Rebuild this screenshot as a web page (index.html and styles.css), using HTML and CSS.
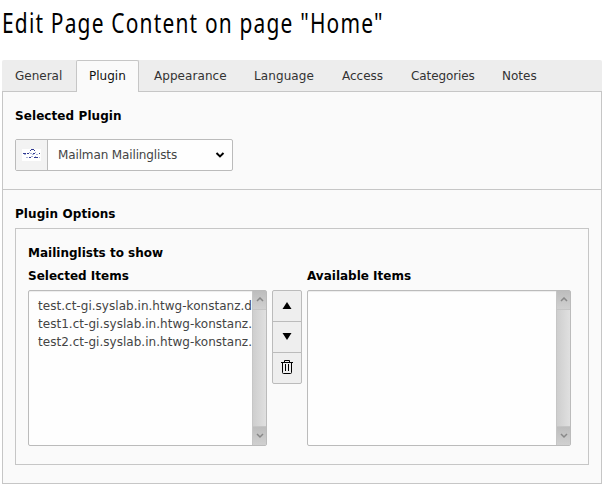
FILE: index.html
```html
<!DOCTYPE html>
<html lang="en">
<head>
<meta charset="utf-8">
<title>Edit Page Content</title>
<link rel="stylesheet" href="styles.css">
</head>
<body>
<h1><span class="title">Edit Page Content on page "Home"</span></h1>
<main class="module">
  <nav class="tabs">
    <a class="tab general">General</a><a class="tab active">Plugin</a><a class="tab appearance">Appearance</a><a class="tab language">Language</a><a class="tab access">Access</a><a class="tab categories">Categories</a><a class="tab">Notes</a>
  </nav>
  <div class="panel">
    <section class="selected-plugin">
      <h2>Selected Plugin</h2>
      <div class="select">
        <span class="addon">
          <svg width="19" height="12" viewBox="0 0 19 12" shape-rendering="crispEdges">
            <path fill="#fff" d="M0 0h19v12H0z"/>
            <path fill="#313a91" d="M1 4h3v1H1zM5 4h2v1H5zM9 0h3v1H9zM8 1h1v1H8zM12 1h1v1h-1zM7 8h2v1H7zM12 8h4v1h-4zM11 4h2v1h-2zM17 4h1v1h-1z"/>
            <path fill="#a9b2d8" d="M2 5h2v1H2zM7 3h1v1H7zM8 4h2v1H8zM10 5h2v1h-2zM9 7h2v1H9zM4 8h2v1H4zM14 5h2v1h-2zM13 7h1v1h-1zM17 8h1v1h-1zM13 3h1v1h-1z"/>
          </svg>
        </span>
        <span class="value">Mailman Mailinglists</span>
        <svg class="caret" width="10" height="6" viewBox="0 0 10 6"><path d="M1.5 1l3.5 3.4L8.500 1" fill="none" stroke="#000" stroke-width="2"/></svg>
      </div>
    </section>
    <section class="options">
      <h2>Plugin Options</h2>
      <div class="box">
        <h3>Mailinglists to show</h3>
        <div class="columns">
          <div class="column chosen">
            <h3>Selected Items</h3>
            <div class="list">
              <div class="items">
                <div>test.ct-gi.syslab.in.htwg-konstanz.d</div>
                <div>test1.ct-gi.syslab.in.htwg-konstanz.</div>
                <div>test2.ct-gi.syslab.in.htwg-konstanz.</div>
              </div>
              <div class="scrollbar">
                <span class="up"><svg width="8" height="6" viewBox="0 0 8 6"><path d="M1 4l3-3 3 3"/></svg></span>
                <span class="down"><svg width="8" height="6" viewBox="0 0 8 6"><path d="M1 1l3 3 3-3"/></svg></span>
              </div>
            </div>
          </div>
          <div class="buttons">
            <span class="button"><svg width="16" height="16" viewBox="0 0 16 16"><path d="M3.500 11h9L8 4z"/></svg></span>
            <span class="button"><svg width="16" height="16" viewBox="0 0 16 16"><path d="M3.500 4h9L8 11z"/></svg></span>
            <span class="button"><svg width="16" height="16" viewBox="0 0 16 16"><path class="line" d="M2 2.500h12M5.500 2V.5h5V2M3.500 3v9.500a1 1 0 0 0 1 1h7a1 1 0 0 0 1-1V3M6.500 4v7M9.500 4v7"/></svg></span>
          </div>
          <div class="column available">
            <h3>Available Items</h3>
            <div class="list">
              <div class="items"></div>
              <div class="scrollbar">
                <span class="up"><svg width="8" height="6" viewBox="0 0 8 6"><path d="M1 4l3-3 3 3"/></svg></span>
                <span class="down"><svg width="8" height="6" viewBox="0 0 8 6"><path d="M1 1l3 3 3-3"/></svg></span>
              </div>
            </div>
          </div>
        </div>
      </div>
    </section>
  </div>
</main>
</body>
</html>
```
FILE: styles.css
```css
* { box-sizing: border-box; }
body {
  margin: 0;
  background: #fff;
  color: #000;
  font: 12px/18px "DejaVu Sans", Verdana, sans-serif;
  overflow: hidden;
}
h1 {
  height: 60px;
  margin: 0;
  padding: 5px 0 0 2px;
  font: 400 26.5px/36px "Noto Sans", sans-serif;
  white-space: nowrap;
}
.title {
  display: inline-block;
  letter-spacing: 1.5px;
  transform: scaleX(.79);
  transform-origin: 0 0;
}
h2, h3 { margin: 0; font-size: 12px; line-height: 18px; font-weight: 700; }
h2 { letter-spacing: .08px; }
.module { width: 600px; margin-left: 2px; }
.tabs {
  display: flex;
  height: 32px;
  background: #ededed;
  border-radius: 2px 2px 0 0;
  box-shadow: inset 0 -1px #c6c6c6;
}
.tab {
  height: 32px;
  padding: 0 12px;
  border: 1px solid transparent;
  border-bottom: 0;
  line-height: 30px;
  color: #333;
}
.general { width: 74px; }
.appearance { width: 100px; letter-spacing: .06px; }
.language { width: 88px; letter-spacing: .1px; }
.access { width: 69px; }
.categories { width: 91px; letter-spacing: -.1px; }
.tab.active {
  width: 63px;
  margin-right: 2px;
  background: #fafafa;
  border-color: #c6c6c6;
  border-radius: 2px 2px 0 0;
  color: #111;
}
.panel {
  height: 392px;
  border: 1px solid #c6c6c6;
  border-top: 0;
  background: #fafafa;
}
.selected-plugin {
  height: 98px;
  padding: 15px 12px 0;
  border-bottom: 1px solid #c6c6c6;
}
.select {
  display: flex;
  align-items: center;
  width: 218px;
  height: 32px;
  margin-top: 14px;
  padding-right: 7px;
  border: 1px solid #bbb;
  border-radius: 2px;
  background: #fefefe;
  color: #444;
}
.addon {
  display: flex;
  align-items: center;
  justify-content: center;
  width: 32px;
  height: 30px;
  border-right: 1px solid #bbb;
  background: #f3f3f3;
}
.value { flex: 1; padding-left: 10px; letter-spacing: -.13px; }
.options { padding: 15px 12px 0; }
.box {
  height: 237px;
  margin-top: 5px;
  padding: 15px 12px 0;
  border: 1px solid #c6c6c6;
}
.columns { display: flex; align-items: flex-end; margin-top: 5px; height: 179px; }
.column { height: 179px; }
.chosen { width: 239px; }
.available { width: 264px; }
.list {
  display: flex;
  height: 156px;
  margin-top: 5px;
  border: 1px solid #bbb;
  border-radius: 2px;
  background: #fefefe;
  box-shadow: inset 0 1px 1px rgba(0, 0, 0, .07);
}
.items {
  flex: 1;
  min-width: 0;
  padding: 6px 0 0 9px;
  white-space: nowrap;
  letter-spacing: .03px;
  color: #444;
}
.scrollbar {
  display: flex;
  flex-direction: column;
  justify-content: space-between;
  width: 14px;
  border-left: 1px solid #c6c6c6;
  background: linear-gradient(90deg, #cecece, #e0e0e0);
}
.up, .down {
  display: flex;
  align-items: center;
  justify-content: center;
  height: 19px;
  background: linear-gradient(#bdbdbd, #d0d0d0);
}
.up { border-bottom: 1px solid #c5c5c5; }
.down { border-top: 1px solid #c5c5c5; }
.scrollbar path { fill: none; stroke: #888; stroke-width: 1.5; }
.buttons {
  width: 30px;
  height: 156px;
  margin: 0 5px;
}
.button {
  display: flex;
  align-items: center;
  justify-content: center;
  height: 32px;
  margin-bottom: -1px;
  border: 1px solid #bbb;
  background: #eee;
}
.button:first-child { border-radius: 2px 2px 0 0; }
.button:last-child { border-radius: 0 0 2px 2px; }
.line { fill: none; stroke: #000; }
```
